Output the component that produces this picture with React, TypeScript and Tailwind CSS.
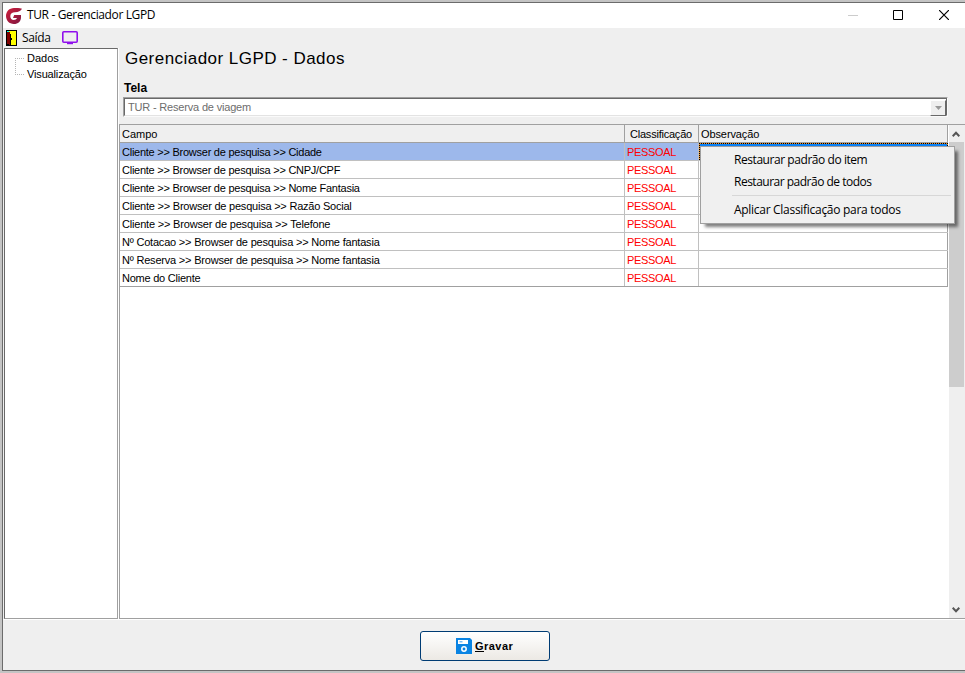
import type { ReactNode } from "react";

const ROWS = [
  { campo: "Cliente >> Browser de pesquisa >> Cidade", spacing: "tracking-[-0.25px]" },
  { campo: "Cliente >> Browser de pesquisa >> CNPJ/CPF", spacing: "tracking-[-0.25px]" },
  { campo: "Cliente >> Browser de pesquisa >> Nome Fantasia", spacing: "tracking-[-0.25px]" },
  { campo: "Cliente >> Browser de pesquisa >> Razão Social", spacing: "tracking-[-0.22px]" },
  { campo: "Cliente >> Browser de pesquisa >> Telefone", spacing: "tracking-[-0.19px]" },
  { campo: "Nº Cotacao >> Browser de pesquisa >> Nome fantasia", spacing: "tracking-[-0.2px]" },
  { campo: "Nº Reserva >> Browser de pesquisa >> Nome fantasia", spacing: "tracking-[-0.2px]" },
  { campo: "Nome do Cliente", spacing: "tracking-[-0.24px]" },
];

function LogoIcon() {
  return (
    <svg width="16" height="16" viewBox="0 0 16 16" className="shrink-0">
      <defs>
        <linearGradient id="logo" x1="0" y1="0" x2="1" y2="1">
          <stop offset="0" stopColor="#cf1f3c" />
          <stop offset="1" stopColor="#7c1640" />
        </linearGradient>
      </defs>
      <path
        d="M16 .8C13.500 0 10.500 0 8 0 3.300 0 0 3.600 0 8s3.300 8 7.800 8c4.400 0 7.200-2.800 7.200-6.800V7H8.200L7 10h4c-.5 1.300-1.600 2-3.200 2C5.700 12 4.300 10.300 4.300 8.200 4.300 5.600 6.200 4.300 9 4.300c3.500 0 5.800-1.300 7-3.500z"
        fill="url(#logo)"
      />
    </svg>
  );
}

function DoorIcon() {
  return (
    <svg width="11" height="16" viewBox="0 0 11 16" shapeRendering="crispEdges" className="shrink-0">
      <path d="M0 0h11v16H0z" fill="#000" />
      <path d="M3 1h7v14H3z" fill="#ff0" />
      <path d="M1 2h3v2h1v11H3v-1H1z" fill="#800000" />
      <path d="M4 4h1v11H4zM5 8h1v2H5z" fill="#000" />
      <path d="M1 1h2v1H1z" fill="#0ff" />
    </svg>
  );
}

function MonitorIcon() {
  return (
    <svg width="16" height="14" viewBox="0 0 16 14" className="shrink-0">
      <rect x=".8" y=".8" width="14.400" height="10.400" rx="1" fill="none" stroke="#8f10ec" strokeWidth="1.600" />
      <path d="M5 12.200h6" stroke="#8f10ec" strokeWidth="2" />
    </svg>
  );
}

function DisketteIcon() {
  return (
    <svg width="16" height="16" viewBox="0 0 16 16" className="shrink-0">
      <path d="M0 0h14l2 2v14H0z" fill="#0a84e3" />
      <path d="M2 2h10v4H2z" fill="#fff" />
      <path d="M3.500 3h3v1.500h-3z" fill="#7dbdf0" />
      <circle cx="8" cy="11" r="2.200" fill="none" stroke="#fff" strokeWidth="1.500" />
    </svg>
  );
}

function Chevron({ down = false }: { down?: boolean }) {
  return (
    <svg width="8" height="6" viewBox="0 0 8 6">
      <path d={down ? "M.7 .8 4 4.200 7.300 .8" : "M.7 5.200 4 1.800 7.300 5.200"} fill="none" stroke="#555" strokeWidth="2" />
    </svg>
  );
}

function TitleBar() {
  return (
    <header className="flex h-[25px] shrink-0 items-center bg-white pl-[3px] font-['Open_Sans',sans-serif] text-xs leading-4">
      <LogoIcon />
      <span className="-mt-px ml-[5px] tracking-[-0.37px]">TUR - Gerenciador LGPD</span>
      <svg width="10" height="10" viewBox="0 0 10 10" className="-mt-px ml-auto">
        <path d="M0 5.500h10" stroke="#ccc" />
      </svg>
      <svg width="10" height="10" viewBox="0 0 10 10" className="-mt-px ml-[35px]">
        <path d="M.5 .5h9v9h-9z" fill="none" stroke="#000" />
      </svg>
      <svg width="10" height="10" viewBox="0 0 10 10" className="-mt-px mr-4 ml-9">
        <path d="M0 0l10 10M10 0 0 10" stroke="#000" strokeWidth="1.200" />
      </svg>
    </header>
  );
}

function TreePanel() {
  return (
    <aside className="h-[571px] w-[114px] shrink-0 border border-[#a0a0a0] border-t-[#696969] border-l-[#696969] bg-white pt-px pl-[10px]">
      <div className="flex">
        <div className="mt-2 h-[17px] w-[9px] border-y border-l border-dotted border-[#b5b5b5]" />
        <div className="ml-[3px] flex flex-col leading-4">
          <span>Dados</span>
          <span className="tracking-[-0.15px]">Visualização</span>
        </div>
      </div>
    </aside>
  );
}

function Combo() {
  return (
    <div className="ml-[4px] flex h-5 w-[825px] border border-[#fafafa] border-t-[#a0a0a0] border-l-[#a0a0a0]">
      <div className="flex flex-1 items-center border border-r-[#696969] border-b-[#e3e3e3] border-t-[#696969] border-l-[#696969] bg-white pl-[3px]">
        <span className="mt-px tracking-[-0.18px] text-[#6d6d6d]">TUR - Reserva de viagem</span>
        <span className="mt-px ml-auto flex h-4 w-4 items-center justify-center border border-[#696969] border-t-white border-l-white bg-[#efefef]">
          <svg width="7" height="4" viewBox="0 0 7 4">
            <path d="M0 0h7L3.500 4z" fill="#999" />
          </svg>
        </span>
      </div>
    </div>
  );
}

function Cell({ className, children }: { className: string; children?: ReactNode }) {
  return <div className={`flex h-full shrink-0 items-center border-r pt-px ${className}`}>{children}</div>;
}

function Grid() {
  return (
    <section className="flex h-[495px] border-y border-l border-[#a0a0a0] bg-white">
      <div className="w-[829px] shrink-0">
        <div className="flex h-[18px] w-[828px] border-b border-[#a0a0a0] bg-[#efefef]">
          <Cell className="w-[505px] border-[#a0a0a0] pl-[2px]">Campo</Cell>
          <Cell className="w-[74px] border-[#a0a0a0] pl-[5px] tracking-[-0.22px]">Classificação</Cell>
          <Cell className="w-[249px] border-[#a0a0a0] pl-[2px] tracking-[-0.1px]">Observação</Cell>
        </div>
        {ROWS.map((row, i) => (
          <div
            key={row.campo}
            className={`flex h-[18px] w-[828px] border-b ${i === ROWS.length - 1 ? "border-[#a0a0a0]" : "border-[#c0c0c0]"} ${i === 0 ? "bg-[#9db8eb]" : ""}`}
          >
            <Cell className="w-[505px] border-[#c0c0c0] pl-[2px]">
              <span className={row.spacing}>{row.campo}</span>
            </Cell>
            <Cell className="w-[74px] border-[#c0c0c0] pl-[2px] tracking-[-0.35px] text-[#f00]">PESSOAL</Cell>
            {i === 0 ? (
              // célula em edição, com o retângulo de foco pontilhado
              <div className="h-full w-[249px] border border-dotted border-black bg-[#f08c1e]">
                <div className="h-full bg-[#0a80f5]" />
              </div>
            ) : (
              <Cell className="w-[249px] border-[#a0a0a0]" />
            )}
          </div>
        ))}
      </div>
      <div className="flex flex-1 flex-col items-start bg-[#efefef]">
        <div className="flex h-[17px] items-center pt-px pl-[3px]"><Chevron /></div>
        <div className="h-[245px] w-[15px] bg-[#cdcdcd]" />
        <div className="mt-auto flex h-[17px] items-center pl-[3px]"><Chevron down /></div>
      </div>
    </section>
  );
}

function ContextMenu() {
  return (
    <div className="absolute top-[146px] left-[700px] h-[78px] w-[255px] border border-[#a0a0a0] bg-[#f0f0f0] pt-[2px] font-['Open_Sans',sans-serif] text-xs shadow-[4px_4px_3px_-1px_rgba(0,0,0,0.5)]">
      <p className="h-[22px] pl-[33px] leading-[22px] tracking-[-0.44px]">Restaurar padrão do item</p>
      <p className="h-[22px] pl-[33px] leading-[22px] tracking-[-0.5px]">Restaurar padrão de todos</p>
      <hr className="mt-[2px] mr-[3px] mb-[3px] ml-[31px] border-[#d7d7d7]" />
      <p className="h-[22px] pl-[33px] leading-[22px] tracking-[-0.29px]">Aplicar Classificação para todos</p>
    </div>
  );
}

export default function App() {
  return (
    <div className="relative h-[673px] w-[965px] overflow-hidden bg-[#c4c4c4] pt-[2px] pl-[2px] font-['Liberation_Sans',sans-serif] text-[11px] leading-[13px] text-black">
      <div className="flex h-[669px] flex-col border-y border-l border-[#6b6b6b] bg-[#efefef]">
        <TitleBar />
        <nav className="flex h-5 shrink-0 items-center pl-[3px] font-['Open_Sans',sans-serif] text-xs leading-4">
          <DoorIcon />
          <span className="mr-[11px] ml-[5px] tracking-[-0.35px]">Saída</span>
          <MonitorIcon />
        </nav>
        <div className="flex h-[572px] border-b border-white pl-px">
          <TreePanel />
          <main className="min-w-0 flex-1 border-l border-white">
            <h1 className="mt-px ml-[6px] h-5 text-[17px] leading-5 tracking-[0.46px]">Gerenciador LGPD - Dados</h1>
            <h2 className="mt-[11px] ml-[5px] h-[17px] text-xs leading-4 font-bold">Tela</h2>
            <Combo />
            <div className="h-[7px]" />
            <Grid />
          </main>
        </div>
        <footer className="flex flex-1 items-start pt-[11px] pl-[417px]">
          <button
            type="button"
            className="flex h-[30px] w-[130px] items-center rounded-[3px] border border-[#003c74] bg-linear-to-b from-white to-[#ece9e4] pl-[35px] text-[11px] font-bold"
          >
            <DisketteIcon />
            <span className="ml-[3px] tracking-[0.45px]"><span className="underline">G</span>ravar</span>
          </button>
        </footer>
      </div>
      <ContextMenu />
    </div>
  );
}
